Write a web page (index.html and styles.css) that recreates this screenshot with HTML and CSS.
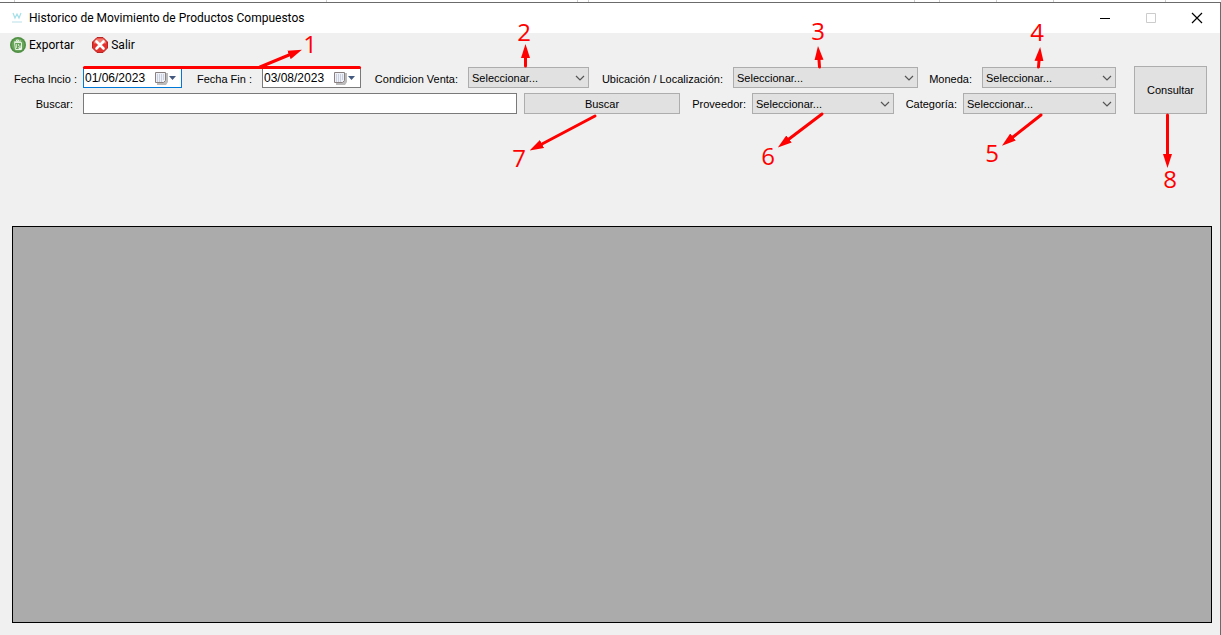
FILE: index.html
```
<!DOCTYPE html>
<html lang="es">
<head>
    <meta charset="UTF-8">
    <meta name="viewport" content="width=device-width, initial-scale=1.0">
    <title>Historico de Movimiento de Productos Compuestos</title>
    <link rel="stylesheet" href="styles.css">
</head>
<body>

<!-- Shared icons -->
<svg class="icon-defs" aria-hidden="true">
    <symbol id="chevron" viewBox="0 0 10 6"><path d="M1 1l4 4 4-4" fill="none" stroke="#555" stroke-width="1.2"/></symbol>
    <symbol id="calendar" viewBox="0 0 22 14">
        <path d="M2 2h11v9l-2 3H2z" fill="#bbb"/>
        <path d="M.5 1.500h10v8l-2 2h-8z" fill="#eef1f8" stroke="#8a8080"/>
        <path d="M2 4h7M2 6h7M2 8h7M2 10h5" stroke="#a5adc4" stroke-dasharray="1 1"/>
        <path d="M14 5h7l-3.500 4z" fill="#44597f"/>
    </symbol>
</svg>

<div class="backdrop">
    <i class="tick-a"></i><i class="tick-b"></i><i class="tick-c"></i><i class="tick-d"></i><i class="tick-e"></i><i class="tick-f"></i><i class="tick-f"></i><i class="tick-g"></i><i class="tick-e"></i>
</div>

<div class="window">
    <!-- Title bar -->
    <header class="title-bar">
        <svg class="app-icon" viewBox="0 0 12 14">
            <path d="M2 2l2 5 2-4 2 4 2-5" fill="none" stroke="#a5e0e8" stroke-width="1.2"/>
            <path d="M1 11h10" stroke="#b9dfe8" stroke-width="1"/>
        </svg>
        <h1>Historico de Movimiento de Productos Compuestos</h1>
        <div class="window-buttons">
            <button type="button" aria-label="Minimizar"><svg viewBox="0 0 12 12"><path d="M1 6.500h10" stroke="#000"/></svg></button>
            <button type="button" aria-label="Maximizar" disabled><svg viewBox="0 0 12 12"><path d="M1.500 1.500h9v9h-9z" fill="none" stroke="#ccc"/></svg></button>
            <button type="button" aria-label="Cerrar"><svg viewBox="0 0 12 12"><path d="M1 1l10 10M11 1L1 11" stroke="#000" stroke-width="1.2"/></svg></button>
        </div>
    </header>

    <!-- Toolbar -->
    <nav class="toolbar">
        <button type="button">
            <svg viewBox="0 0 16 16">
                <circle cx="8" cy="8" r="8" fill="#4f8f43"/>
                <circle cx="8" cy="8" r="6.500" fill="#69a55b"/>
                <path d="M4.500 5.500h7v7h-6zM4 5l7-1M6.500 4V3h2v1" fill="none" stroke="#e4f1df"/>
                <path d="M6.500 7v4M8.500 7v2" stroke="#c6dfbf"/>
                <path d="M10 8.500v3.500M8.500 10.500l1.500 2 1.500-2" fill="none" stroke="#fff"/>
            </svg>
            Exportar
        </button>
        <button type="button">
            <svg viewBox="0 0 16 16">
                <path d="M5 .5h6L15.500 5v6L11 15.500H5L.5 11V5z" fill="#e3312d" stroke="#b92525"/>
                <path d="M5 1.500h6l3 3v2H2v-2z" fill="#f47a70"/>
                <path d="M4.500 4.500l7 7M11.500 4.500l-7 7" stroke="#fff" stroke-width="2.600" stroke-linecap="round"/>
            </svg>
            Salir
        </button>
    </nav>

    <!-- Filters -->
    <form class="filters">
        <div class="filter-rows">
            <div class="row row-top">
                <label for="fechaInicio">Fecha Incio :</label>
                <span class="date focused">
                    <input type="text" id="fechaInicio" value="01/06/2023">
                    <svg><use href="#calendar"/></svg>
                </span>
                <label for="fechaFin">Fecha Fin :</label>
                <span class="date">
                    <input type="text" id="fechaFin" value="03/08/2023">
                    <svg><use href="#calendar"/></svg>
                </span>
                <label for="condicion">Condicion Venta:</label>
                <span class="combo">
                    <select id="condicion"><option>Seleccionar...</option></select>
                    <svg><use href="#chevron"/></svg>
                </span>
                <label for="ubicacion">Ubicación / Localización:</label>
                <span class="combo">
                    <select id="ubicacion"><option>Seleccionar...</option></select>
                    <svg><use href="#chevron"/></svg>
                </span>
                <label for="moneda">Moneda:</label>
                <span class="combo">
                    <select id="moneda"><option>Seleccionar...</option></select>
                    <svg><use href="#chevron"/></svg>
                </span>
            </div>
            <div class="row row-bottom">
                <label for="buscar">Buscar:</label>
                <input type="text" class="search" id="buscar">
                <button type="button" class="btn">Buscar</button>
                <label for="proveedor">Proveedor:</label>
                <span class="combo">
                    <select id="proveedor"><option>Seleccionar...</option></select>
                    <svg><use href="#chevron"/></svg>
                </span>
                <label for="categoria">Categoría:</label>
                <span class="combo">
                    <select id="categoria"><option>Seleccionar...</option></select>
                    <svg><use href="#chevron"/></svg>
                </span>
            </div>
        </div>
        <button type="submit" class="btn consultar">Consultar</button>
    </form>

    <!-- Results grid, empty until a query runs -->
    <main class="results"></main>
</div>

<!-- Numbered callouts over the form -->
<svg class="callouts" width="1221" height="200">
    <defs>
        <marker id="head" markerUnits="userSpaceOnUse" markerWidth="14" markerHeight="10" refX="0" refY="5" orient="auto">
            <path d="M0 .5l14 4.500-14 4.500z" fill="#f00"/>
        </marker>
    </defs>
    <path class="underline" d="M84.500 67.500h275"/>
    <g class="arrows">
        <path d="M260 67l29-12"/>
        <path d="M525.500 66v-8"/>
        <path d="M819.500 67l-.5-7"/>
        <path d="M1038.500 67l.5-6"/>
        <path d="M1041 115l-28 22"/>
        <path d="M822 114l-33 25"/>
        <path d="M595 116l-53 28"/>
        <path d="M1167.500 115v39"/>
    </g>
    <text x="310" y="53">1</text>
    <text x="524" y="41">2</text>
    <text x="818" y="40">3</text>
    <text x="1037" y="41">4</text>
    <text x="992" y="162">5</text>
    <text x="768" y="165">6</text>
    <text x="519" y="167">7</text>
    <text x="1170" y="188">8</text>
</svg>

</body>
</html>
```
FILE: styles.css
```
* {
    margin: 0;
    padding: 0;
    box-sizing: border-box;
}

body {
    position: relative;
    display: flex;
    flex-direction: column;
    height: 100vh;
    overflow: hidden;
    background: #fff;
    color: #000;
    font-family: "Liberation Sans", Arial, sans-serif;
    font-size: 11px;
}

input, select, button {
    font: inherit;
    color: inherit;
}

.icon-defs {
    position: absolute;
    width: 0;
    height: 0;
}

/* Sliver of the window behind */
.backdrop {
    display: flex;
    height: 2px;
    padding-left: 14px;
}

.backdrop i {
    border-left: 1px solid #ccc;
}

.tick-a { width: 312px; }
.tick-b { width: 251px; }
.tick-c { width: 11px; }
.tick-d { width: 326px; }
.tick-e { width: 25px; }
.tick-f { width: 57px; }
.tick-g { width: 112px; }

.window {
    flex: 1;
    display: flex;
    flex-direction: column;
    background: #f0f0f0;
    border-top: 1px solid #6b6b6b;
    border-right: 1px solid #6b6b6b;
}

/* Title bar */
.title-bar {
    display: flex;
    align-items: center;
    height: 30px;
    padding-left: 11px;
    background: #fff;
}

.app-icon {
    width: 12px;
    height: 14px;
    margin-right: 6px;
}

.title-bar h1 {
    flex: 1;
    font-family: Roboto, sans-serif;
    font-size: 12px;
    font-weight: 400;
}

.window-buttons {
    display: flex;
}

.window-buttons button {
    width: 46px;
    height: 28px;
    background: none;
    border: none;
}

.window-buttons svg {
    display: block;
    width: 12px;
    height: 12px;
    margin: 0 auto;
}

/* Toolbar */
.toolbar {
    display: flex;
    gap: 18px;
    height: 24px;
    padding-left: 10px;
}

.toolbar button {
    display: flex;
    align-items: center;
    gap: 3px;
    background: none;
    border: none;
    font-family: Roboto, sans-serif;
    font-size: 12px;
}

.toolbar svg {
    width: 16px;
    height: 16px;
}

/* Filters */
.filters {
    display: flex;
    align-items: flex-end;
    gap: 18px;
    padding: 9px 13px 0 14px;
}

.filter-rows {
    flex: 1;
    display: flex;
    flex-direction: column;
    gap: 5px;
}

.row {
    display: grid;
    height: 21px;
    align-items: center;
}

.row-top {
    grid-template-columns: 69px 99px 80px 99px 107px 121fr 144px 185fr 64px 134fr;
}

.row-bottom {
    grid-template-columns: 69px 434fr 163px 72px 142fr 69px 153fr;
}

.row label {
    text-align: right;
    white-space: nowrap;
}

.row-top label {
    padding-top: 3px;
    padding-right: 10px;
}

.row-bottom label {
    padding-right: 6px;
}

.row-bottom label:first-child {
    padding-right: 10px;
}

.date {
    display: flex;
    align-items: center;
    height: 21px;
    background: #fff;
    border: 1px solid #7a7a7a;
}

.date.focused {
    border-color: #0078d7;
}

.date input {
    flex: 1;
    min-width: 0;
    padding-left: 1px;
    background: none;
    border: none;
    font-size: 12px;
}

.date svg {
    width: 22px;
    height: 14px;
    margin-right: 4px;
}

.combo {
    position: relative;
    height: 21px;
}

.combo select {
    display: block;
    width: 100%;
    height: 100%;
    padding: 0 20px 0 3px;
    appearance: none;
    background: #e1e1e1;
    border: 1px solid #adadad;
    border-radius: 0;
}

.combo svg {
    position: absolute;
    top: 8px;
    right: 4px;
    width: 10px;
    height: 6px;
    pointer-events: none;
}

.search {
    height: 21px;
    padding: 0 3px;
    background: #fff;
    border: 1px solid #7a7a7a;
}

.btn {
    background: #e1e1e1;
    border: 1px solid #adadad;
}

.row .btn {
    height: 21px;
    margin-left: 7px;
}

.consultar {
    width: 73px;
    height: 48px;
}

/* Results */
.results {
    flex: 1;
    margin: 112px 8px 12px 12px;
    background: #ababab;
    border: 1px solid #000;
}

/* Callouts */
.callouts {
    position: absolute;
    top: 0;
    left: 0;
    pointer-events: none;
}

.underline, .arrows {
    fill: none;
    stroke: #f00;
    stroke-width: 3;
    stroke-linecap: round;
}

.arrows path {
    marker-end: url(#head);
}

.callouts text {
    fill: #f00;
    font-family: "Open Sans", "Noto Sans", sans-serif;
    font-size: 24px;
    text-anchor: middle;
}
```
